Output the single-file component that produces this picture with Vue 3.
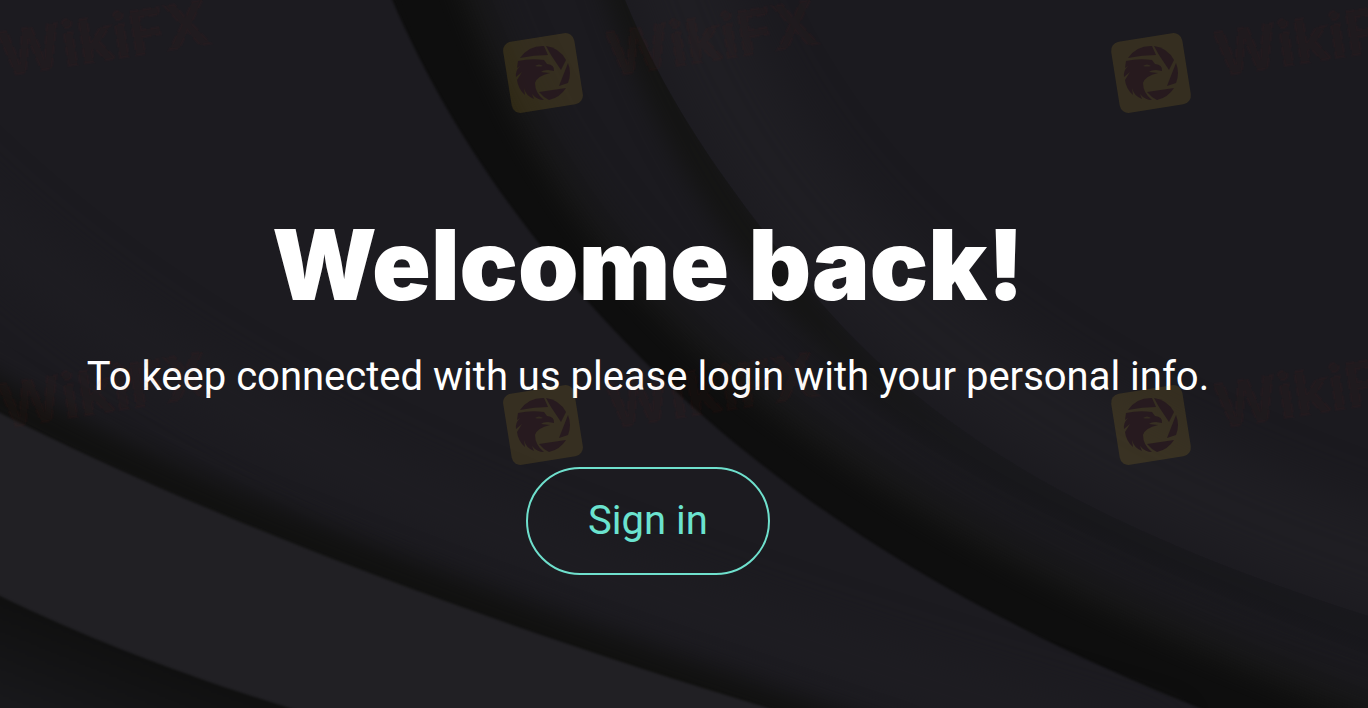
<template>
  <main class="welcome">
    <svg class="backdrop" viewBox="0 0 1368 708" preserveAspectRatio="xMidYMid slice" aria-hidden="true">
      <defs>
        <filter id="soft" x="-20%" y="-20%" width="140%" height="140%" color-interpolation-filters="sRGB">
          <feGaussianBlur stdDeviation="12" />
        </filter>
        <filter id="wide" x="-20%" y="-20%" width="140%" height="140%" color-interpolation-filters="sRGB">
          <feGaussianBlur stdDeviation="22" />
        </filter>
        <filter id="edge" x="-5%" y="-5%" width="110%" height="110%" color-interpolation-filters="sRGB">
          <feGaussianBlur stdDeviation="1" />
        </filter>
        <linearGradient id="floor" gradientUnits="userSpaceOnUse" x1="100" y1="638" x2="65" y2="725">
          <stop offset="0" stop-color="#101010" />
          <stop offset="1" stop-color="#18181b" />
        </linearGradient>
        <linearGradient id="fold" gradientUnits="userSpaceOnUse" x1="640" y1="0" x2="1368" y2="640">
          <stop offset="0" stop-color="#141413" />
          <stop offset="0.3" stop-color="#141413" />
          <stop offset="0.55" stop-color="#18181b" />
          <stop offset="1" stop-color="#18181c" />
        </linearGradient>
        <clipPath id="foldClip">
          <path d="M625 0C670 110 730 188 790 265C900 407 1050 515 1368 616V708H0V0Z" />
        </clipPath>
      </defs>
      <rect width="1368" height="708" fill="#1b1a1f" />
      <path class="sheen" d="M660 -80C730 180 930 430 1460 590" filter="url(#wide)" />
      <g clip-path="url(#foldClip)">
        <path fill="#1b1a1f" d="M0 0H1368V708H0Z" />
        <path class="fold" d="M606 -60C656 105 716 195 776 272C886 414 1040 528 1440 650" filter="url(#soft)" />
      </g>
      <path class="valley-wide" d="M395 -80C455 140 560 290 690 400C850 535 1040 640 1400 775" filter="url(#wide)" />
      <path class="valley" d="M395 -80C455 140 560 290 690 400C850 535 1040 640 1400 775" filter="url(#soft)" />
      <path fill="#1c1b20" filter="url(#edge)" d="M390 -5C437 105 495 190 555 263C700 440 900 590 1212 713H-10V-5Z" />
      <path class="sheen left" d="M-80 160C180 420 500 560 1160 755" filter="url(#wide)" />
      <path class="ridge" d="M-80 355C120 482 430 598 900 754" filter="url(#soft)" />
      <path fill="#212024" filter="url(#edge)" d="M-10 408C150 490 430 608 795 716H-10Z" />
      <path fill="url(#floor)" filter="url(#edge)" d="M-10 591C90 640 190 678 315 716H-10Z" />
    </svg>

    <section class="panel">
      <h1 class="title">Welcome back!</h1>
      <p class="subtitle">To keep connected with us please login with your personal info.</p>
      <button type="button" class="signin">Sign in</button>
    </section>

    <svg class="marks" viewBox="0 0 1368 708" preserveAspectRatio="xMidYMid slice" aria-hidden="true">
      <g v-for="mark in marks" :key="mark.id" :transform="`translate(${mark.x} ${mark.y})`">
        <rect class="mark-tile" x="-36" y="-36" width="72" height="72" rx="9" transform="rotate(-9)" />
        <g class="mark-bird">
          <path d="M-23 -15A28 28 0 0 1 1 -27L5 -18Q-9 -18 -23 -15Z" />
          <path d="M3 -27A27 27 0 0 1 23 -13L18 -3L8 -18Z" />
          <path d="M25 -10A27 27 0 0 1 25 10L16 13Z" />
          <path d="M23 15A27 27 0 0 1 6 27Q0 24 -4 19Z" />
          <path d="M-25 -12Q-12 -15 1 -13L4 -9Q12 -8 11 -2L5 -3Q0 -3 -2 -1L7 0Q-6 3 -8 10Q-8 20 1 27Q-6 27 -11 21L-9 26Q-17 23 -19 15L-18 22Q-25 16 -26 7L-21 -1L-27 4Q-28 -2 -23 -7L-26 -5Z" />
        </g>
        <path class="mark-eye" d="M-8 -7Q-4 -10 0 -7Q-4 -6 -8 -7Z" />
        <text class="mark-name" x="66" y="14" transform="rotate(-9)">WikiFX</text>
      </g>
    </svg>
  </main>
</template>

<script setup>
const columns = [-65, 543, 1151];
const rows = [73, 425];

const marks = rows.flatMap((y) => columns.map((x) => ({ id: `${x}-${y}`, x, y })));
</script>

<style>
body {
  margin: 0;
  background: #1c1b20;
}
</style>

<style scoped>
.welcome {
  position: relative;
  display: flex;
  justify-content: center;
  box-sizing: border-box;
  min-height: 100vh;
  padding: 209px 72px 132px 0;
  overflow: hidden;
  background: #1c1b20;
  font-family: Roboto, "Liberation Sans", sans-serif;
}

.backdrop,
.marks {
  position: absolute;
  inset: 0;
  width: 100%;
  height: 100%;
}

.marks {
  pointer-events: none;
}

.sheen {
  fill: none;
  stroke: #1f1e23;
  stroke-width: 100px;
}

.sheen.left {
  stroke: #1e1d22;
  stroke-width: 50px;
}

.fold {
  fill: none;
  stroke: url(#fold);
  stroke-width: 36px;
}

.valley-wide {
  fill: none;
  stroke: #161615;
  stroke-width: 120px;
}

.valley {
  fill: none;
  stroke: #0e0e0e;
  stroke-width: 76px;
}

.ridge {
  fill: none;
  stroke: #111110;
  stroke-width: 44px;
}

.panel {
  position: relative;
  display: flex;
  flex-direction: column;
  align-items: center;
  text-align: center;
}

.title {
  margin: 0;
  color: #fff;
  font-family: Inter, "Liberation Sans", sans-serif;
  font-size: 97px;
  font-weight: 900;
  line-height: 112px;
}

.subtitle {
  margin: 32px 0 0;
  color: #fff;
  font-size: 40px;
  font-weight: 400;
  line-height: 48px;
}

.signin {
  margin: 66px 0 0;
  padding: 28px 60px;
  border: 2px solid #6fe0cd;
  border-radius: 54px;
  background: transparent;
  color: #6be3cf;
  font-family: inherit;
  font-size: 40px;
  line-height: 48px;
  cursor: pointer;
}

.mark-tile {
  fill: #f5c828;
  fill-opacity: 0.12;
}

.mark-bird {
  fill: #25161f;
  fill-opacity: 0.85;
}

.mark-eye {
  fill: #332b20;
}

.mark-name {
  fill: #a02820;
  fill-opacity: 0.04;
  stroke: #a02820;
  stroke-opacity: 0.03;
  stroke-width: 3px;
  stroke-dasharray: 9 4;
  font-family: Inter, "Liberation Sans", sans-serif;
  font-size: 61px;
  font-weight: 700;
}
</style>
